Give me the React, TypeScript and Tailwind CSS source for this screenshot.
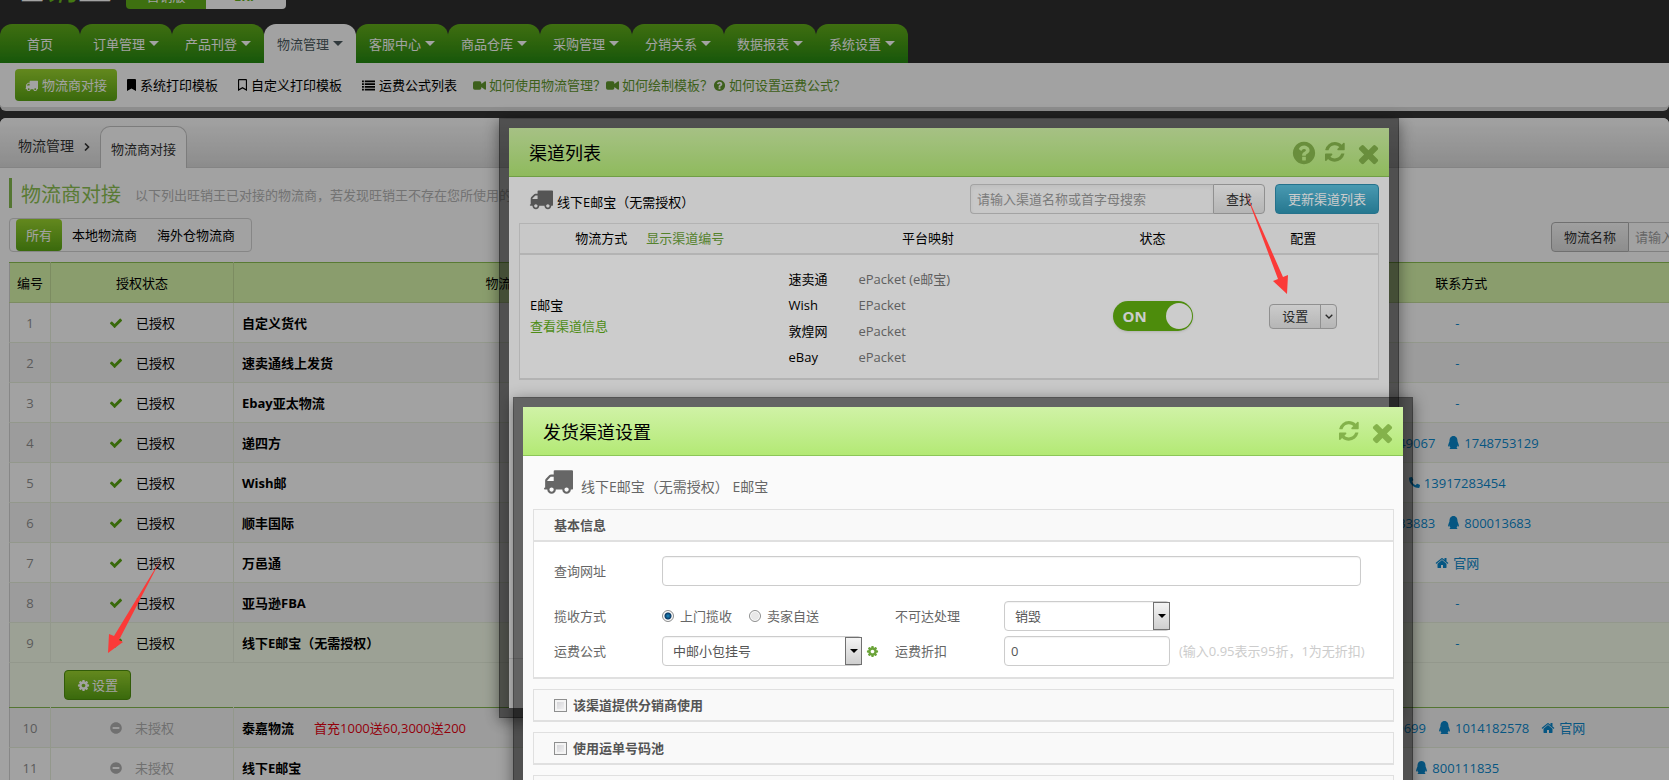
import type { ReactNode } from "react";
import { FaBookmark, FaMinusCircle, FaPhoneAlt, FaQq, FaRegBookmark } from "react-icons/fa";

const icons = {
  check: "M1671 566q0 40-28 68l-724 724-136 136q-28 28-68 28t-68-28l-136-136-362-362q-28-28-28-68t28-68l136-136q28-28 68-28t68 28l294 295 656-657q28-28 68-28t68 28l136 136q28 28 28 68z",
  times: "M1490 1322q0 40-28 68l-136 136q-28 28-68 28t-68-28l-294-294-294 294q-28 28-68 28t-68-28l-136-136q-28-28-28-68t28-68l294-294-294-294q-28-28-28-68t28-68l136-136q28-28 68-28t68 28l294 294 294-294q28-28 68-28t68 28l136 136q28 28 28 68t-28 68l-294 294 294 294q28 28 28 68z",
  refresh: "M1511 928q0 5-1 7-64 268-268 434.5t-478 166.5q-146 0-282.5-55t-243.5-157l-129 129q-19 19-45 19t-45-19-19-45v-448q0-26 19-45t45-19h448q26 0 45 19t19 45-19 45l-137 137q71 66 161 102t187 36q134 0 250-65t186-179q11-17 53-117 8-23 30-23h192q13 0 22.5 9.5t9.5 22.5zm25-800v448q0 26-19 45t-45 19h-448q-26 0-45-19t-19-45 19-45l138-138q-148-137-349-137-134 0-250 65t-186 179q-11 17-53 117-8 23-30 23h-199q-13 0-22.5-9.5t-9.5-22.5v-7q65-268 270-434.5t480-166.5q146 0 284 55.5t245 156.5l130-129q19-19 45-19t45 19 19 45z",
  question: "M1024 1376v-192q0-14-9-23t-23-9h-192q-14 0-23 9t-9 23v192q0 14 9 23t23 9h192q14 0 23-9t9-23zm256-672q0-88-55.5-163t-138.5-116-170-41q-243 0-371 213-15 24 8 42l132 100q7 6 19 6 16 0 25-12 53-68 86-92 34-24 86-24 48 0 85.5 26t37.5 59q0 38-20 61t-68 45q-63 28-115.5 86.5t-52.5 125.5v36q0 14 9 23t23 9h192q14 0 23-9t9-23q0-19 21.5-49.5t54.5-49.5q32-18 49-28.5t46-35 44.5-48 28-60.5 12.5-81zm384 192q0 209-103 385.5t-279.5 279.5-385.5 103-385.5-103-279.5-279.5-103-385.5 103-385.5 279.5-279.5 385.5-103 385.5 103 279.5 279.5 103 385.5z",
  truck: "M640 1408q0-52-38-90t-90-38-90 38-38 90 38 90 90 38 90-38 38-90zm-384-512h384v-256h-158q-13 0-22 9l-195 195q-9 9-9 22v30zm1280 512q0-52-38-90t-90-38-90 38-38 90 38 90 90 38 90-38 38-90zm256-1088v1024q0 15-4 26.5t-13.5 18.5-16.5 11.5-23.5 6-22.5 2-25.5 0-22.5-.5q0 106-75 181t-181 75-181-75-75-181h-384q0 106-75 181t-181 75-181-75-75-181h-64q-3 0-22.5.5t-25.5 0-22.5-2-23.5-6-16.5-11.5-13.5-18.5-4-26.5q0-26 19-45t45-19v-320q0-8-.5-35t0-38 2.5-34.5 6.5-37 14-30.5 22.5-30l198-198q19-19 50.5-32t58.5-13h160v-192q0-26 19-45t45-19h1024q26 0 45 19t19 45z",
  cog: "M1152 896q0-106-75-181t-181-75-181 75-75 181 75 181 181 75 181-75 75-181zm512-109v222q0 12-8 23t-20 13l-185 28q-19 54-39 91 35 50 107 138 10 12 10 25t-9 23q-27 37-99 108t-94 71q-12 0-26-9l-138-108q-44 23-91 38-16 136-29 186-7 28-36 28h-222q-14 0-24.5-8.5t-11.5-21.5l-28-184q-49-16-90-37l-141 107q-10 9-25 9-14 0-25-11-126-114-165-168-7-10-7-23 0-12 8-23 15-21 51-66.5t54-70.5q-27-50-41-99l-183-27q-13-2-21-12.5t-8-23.5v-222q0-12 8-23t19-13l186-28q14-46 39-92-40-57-107-138-10-12-10-24 0-10 9-23 26-36 98.5-107.5t94.5-71.5q13 0 26 10l138 107q44-23 91-38 16-136 29-186 7-28 36-28h222q14 0 24.5 8.5t11.5 21.5l28 184q49 16 90 37l142-107q9-9 24-9 13 0 25 10 129 119 165 170 7 8 7 22 0 12-8 23-15 21-51 66.5t-54 70.5q26 50 41 98l183 28q13 2 21 12.5t8 23.5z",
  home: "M1472 992v480q0 26-19 45t-45 19h-384v-384h-256v384h-384q-26 0-45-19t-19-45v-480q0-1 .5-3t.5-3l575-474 575 474q1 2 1 6zm223-69l-62 74q-8 9-21 11h-3q-13 0-21-7l-692-577-692 577q-12 8-24 7-13-2-21-11l-62-74q-8-10-7-23.5t11-21.5l719-599q32-26 76-26t76 26l244 204v-195q0-14 9-23t23-9h192q14 0 23 9t9 23v408l219 182q10 8 11 21.5t-7 23.5z",
  video: "M0 560q0-240 240-240h672q240 0 240 240v120l460-350q180-60 180 90v952q0 150-180 90l-460-350v120q0 240-240 240h-672q-240 0-240-240z",
  list: "M0 220h256v220h-256zM0 600h256v220h-256zM0 980h256v220h-256zM0 1360h256v220h-256zM384 220h1408v220h-1408zM384 600h1408v220h-1408zM384 980h1408v220h-1408zM384 1360h1408v220h-1408z",
};

function Icon({ name, className }: { name: keyof typeof icons; className: string }) {
  return (
    <svg viewBox="0 0 1792 1792" fill="currentColor" aria-hidden="true" className={`shrink-0 ${className}`}>
      <path d={icons[name]} />
    </svg>
  );
}

const tabs = ["订单管理", "产品刊登", "物流管理", "客服中心", "商品仓库", "采购管理", "分销关系", "数据报表", "系统设置"];

type Contact = { kind: "phone" | "qq" | "home" | "text"; text: string };
type Carrier = { id: number; name: string; ok: boolean; note?: string; contacts?: Contact[] };

const carriers: Carrier[] = [
  { id: 1, name: "自定义货代", ok: true },
  { id: 2, name: "速卖通线上发货", ok: true },
  { id: 3, name: "Ebay亚太物流", ok: true },
  { id: 4, name: "递四方", ok: true, contacts: [{ kind: "text", text: "82949067" }, { kind: "qq", text: "1748753129" }] },
  { id: 5, name: "Wish邮", ok: true, contacts: [{ kind: "phone", text: "13917283454" }] },
  { id: 6, name: "顺丰国际", ok: true, contacts: [{ kind: "text", text: "2233883" }, { kind: "qq", text: "800013683" }] },
  { id: 7, name: "万邑通", ok: true, contacts: [{ kind: "home", text: "官网" }] },
  { id: 8, name: "亚马逊FBA", ok: true },
  { id: 9, name: "线下E邮宝（无需授权）", ok: true },
  { id: 10, name: "泰嘉物流", ok: false, note: "首充1000送60,3000送200", contacts: [{ kind: "phone", text: "13530029699" }, { kind: "qq", text: "1014182578" }, { kind: "home", text: "官网" }] },
  { id: 11, name: "线下E邮宝", ok: false, contacts: [{ kind: "qq", text: "800111835" }] },
];

const mappings = [
  ["速卖通", "ePacket (e邮宝)"],
  ["Wish", "EPacket"],
  ["敦煌网", "ePacket"],
  ["eBay", "ePacket"],
];

function Caret() {
  return <span className="w-0 h-0 border-x-[5px] border-x-transparent border-t-[5px] border-t-current" />;
}

function TopBar() {
  return (
    <header className="bg-[#2f2f2f]">
      <div className="h-6 flex items-start overflow-hidden">
        <div className="w-[126px] h-[6px] pl-[10px] flex items-end overflow-hidden italic text-[34px] leading-[38px] text-white">
          <span>旺</span><span className="text-[#6abf1d]">销</span><span>王</span>
        </div>
        <div className="flex items-end h-[9px] w-40 rounded-b overflow-hidden text-[13px] leading-[26px] text-center">
          <span className="w-20 bg-[#62b01a] text-white">营销版</span>
          <span className="w-20 bg-white font-bold text-[#62b01a]">ERP</span>
        </div>
      </div>
      <nav className="flex text-[13px]">
        <a href="#" className="w-20 h-[39px] flex items-center justify-center rounded-t-xl bg-linear-to-b from-[#63ae1a] to-[#238911] text-white">首页</a>
        {tabs.map((tab) => (
          <a
            key={tab}
            href="#"
            className={
              tab === "物流管理"
                ? "w-[92px] h-[39px] flex items-center justify-center gap-1 rounded-t-xl bg-[#fefefe] text-[#4c5a5f]"
                : "w-[92px] h-[39px] flex items-center justify-center gap-1 rounded-t-xl bg-linear-to-b from-[#63ae1a] to-[#238911] text-white"
            }
          >
            {tab}<Caret />
          </a>
        ))}
      </nav>
    </header>
  );
}

function SubNav() {
  return (
    <div className="h-12 flex items-center bg-[#fefefe] border-b-4 border-[#dedede] rounded-b-md pl-[15px] py-[6px]">
      <a href="#" className="h-8 px-[10px] flex items-center gap-1 rounded bg-linear-to-b from-[#9cd630] to-[#5ba614] text-white"><Icon name="truck" className="size-[13px]" />物流商对接</a>
      <a href="#" className="px-[10px] flex items-center gap-1"><FaBookmark className="w-[9px] h-3" />系统打印模板</a>
      <a href="#" className="px-[10px] flex items-center gap-1"><FaRegBookmark className="w-[9px] h-3" />自定义打印模板</a>
      <a href="#" className="px-[10px] flex items-center gap-1"><Icon name="list" className="size-[13px]" />运费公式列表</a>
      <div className="flex pl-[6px] text-[#61972c]">
        <a href="#" className="flex items-center gap-[3px]"><Icon name="video" className="size-[13px]" />如何使用物流管理？</a>
        <a href="#" className="flex items-center gap-[3px]"><Icon name="video" className="size-[13px]" />如何绘制模板？</a>
        <a href="#" className="flex items-center gap-[3px]"><Icon name="question" className="size-[13px]" />如何设置运费公式？</a>
      </div>
    </div>
  );
}

function ContactLink({ kind, text }: Contact) {
  return (
    <a href="#" className="inline-flex items-center gap-1">
      {kind === "phone" && <FaPhoneAlt className="size-[11px]" />}
      {kind === "qq" && <FaQq className="size-[13px]" />}
      {kind === "home" && <Icon name="home" className="size-[14px]" />}
      {text}
    </a>
  );
}

function CarrierRow({ carrier }: { carrier: Carrier }) {
  const cell = "border-r border-b border-[#e6efdb]";
  const shade = carrier.id === 9 ? "bg-[#f6fdea]" : carrier.id % 2 ? "bg-[#fefefe]" : "bg-[#f6f6f6]";
  return (
    <tr className={`h-10 ${shade}`}>
      <td className={`${cell} text-center text-[#8f8f8f]`}>{carrier.id}</td>
      <td className={cell}>
        <div className={`flex items-center justify-center gap-[13px] ${carrier.ok ? "" : "text-[#b0b0b0]"}`}>
          {carrier.ok ? <Icon name="check" className="size-[14px] text-[#5ba614]" /> : <FaMinusCircle className="size-3" />}
          {carrier.ok ? "已授权" : "未授权"}
        </div>
      </td>
      <td className={`${cell} pl-2`}>
        <b>{carrier.name}</b>
        {carrier.note && <span className="ml-5 text-[#e60012]">{carrier.note}</span>}
      </td>
      <td className={cell} />
      <td className="pr-2 border-b border-[#e6efdb] text-[#0a88cc]">
        <div className="flex justify-center gap-3">
          {carrier.contacts ? carrier.contacts.map((c) => <ContactLink key={c.text} {...c} />) : "-"}
        </div>
      </td>
    </tr>
  );
}

function CarrierPage() {
  const head = "border-r border-[#c2dc99] font-normal";
  return (
    <main className="mt-[7px] grow bg-[#fefefe] rounded-t-md overflow-hidden">
      <div className="h-[50px] flex items-end pl-[18px] bg-linear-to-b from-[#fefefe] to-[#dcdcdc] border-b border-[#cfcfcf]">
        <span className="mb-[11px] text-[14px] leading-5 text-[#333]">物流管理</span>
        <svg viewBox="0 0 6 8" className="w-[6px] h-2 mx-[10px] mb-[16px] fill-none stroke-[#333]" strokeWidth="1.6"><path d="M1 0.5 4.5 4 1 7.5" /></svg>
        <a href="#" className="-mb-px h-[42px] px-[10px] pt-[2px] flex items-center border border-b-0 border-[#c4c4c4] rounded-t-[10px] bg-[#fefefe] text-[#333]">物流商对接</a>
      </div>
      <div className="mt-[10px] ml-[9px] h-[30px] flex items-center gap-[14px] border-l-3 border-[#84b94f] pl-[9px]">
        <h1 className="pt-[3px] text-[20px] leading-[27px] text-[#8cc152]">物流商对接</h1>
        <p className="pt-1 text-[#b4b4b4]">以下列出旺销王已对接的物流商，若发现旺销王不存在您所使用的</p>
      </div>
      <div className="mt-[10px] pl-[9px] flex items-end justify-between">
        <div className="h-[34px] flex items-center px-[6px] border border-[#d2d2d2] rounded">
          <button className="h-8 px-[10px] rounded bg-linear-to-b from-[#9cd630] to-[#5ba614] text-white">所有</button>
          <button className="h-8 px-[10px]">本地物流商</button>
          <button className="h-8 px-[10px]">海外仓物流商</button>
        </div>
        <div className="flex h-[30px]">
          <button className="px-3 rounded-l border border-[#b0b0b0] bg-linear-to-b from-[#fafafa] to-[#dedede] text-[#333]">物流名称</button>
          <input aria-label="物流名称" placeholder="请输入名称" className="w-10 pl-[6px] border-y border-[#c8c8c8] placeholder:text-[#a0a0a0]" />
        </div>
      </div>
      <table className="mt-[10px] ml-[9px] w-[calc(100%-9px)] table-fixed border-collapse border-l border-[#d4d4d4]">
        <colgroup>
          <col className="w-[41px]" />
          <col className="w-[183px]" />
          <col className="w-[556px]" />
          <col />
          <col className="w-[416px]" />
        </colgroup>
        <thead>
          <tr className="h-10 bg-[#d9f7ac] border-t border-b border-t-[#8cc152] border-b-[#c2dc99]">
            <th className={head}>编号</th>
            <th className={head}>授权状态</th>
            <th className={head}>物流名称</th>
            <th className={head} />
            <th className="font-normal">联系方式</th>
          </tr>
        </thead>
        <tbody>
          {carriers.slice(0, 9).map((c) => <CarrierRow key={c.id} carrier={c} />)}
          <tr className="h-[45px] bg-[#f6fdea] border-b border-[#84b94f]">
            <td colSpan={5} className="pl-[54px]">
              <button className="h-[30px] px-3 flex items-center gap-[2px] rounded border border-[#4f9110] bg-linear-to-b from-[#9cd630] to-[#5ba614] text-white"><Icon name="cog" className="size-[13px]" />设置</button>
            </td>
          </tr>
          {carriers.slice(9).map((c) => <CarrierRow key={c.id} carrier={c} />)}
        </tbody>
      </table>
    </main>
  );
}

function Dialog({ title, help, className, children }: { title: string; help?: boolean; className: string; children: ReactNode }) {
  return (
    <section role="dialog" aria-label={title} className={`absolute w-[900px] h-[600px] flex flex-col border-10 border-black/50 bg-[#fafafa] bg-clip-padding shadow-[0_3px_14px_rgba(0,0,0,0.45)] ${className}`}>
      <header className="h-12 shrink-0 flex items-center gap-[10px] pt-[2px] pl-5 pr-[10px] bg-linear-to-b from-[#d0f2a6] to-[#b3e974] text-[#84b24b]">
        <h2 className="mr-auto text-lg text-black">{title}</h2>
        {help && <button aria-label="帮助"><Icon name="question" className="size-[26px] -mx-[2px]" /></button>}
        <button aria-label="刷新"><Icon name="refresh" className="size-[23px]" /></button>
        <button aria-label="关闭"><Icon name="times" className="size-[29px] -mx-1" /></button>
      </header>
      <div className="grow border-t border-[#8cc658]">{children}</div>
    </section>
  );
}

function ChannelList() {
  return (
    <Dialog title="渠道列表" help className="left-[499px] top-[118px]">
      <div className="h-full flex flex-col">
        <div className="flex items-center pl-5 pr-[10px] pt-[7px]">
          <Icon name="truck" className="size-6 mr-1 text-[#6b6b6b]" />
          <span className="pt-[6px]">线下E邮宝（无需授权）</span>
          <input aria-label="渠道名称" placeholder="请输入渠道名称或首字母搜索" className="ml-auto w-[243px] h-[30px] px-[6px] border border-r-0 border-[#ccc] rounded-l inset-shadow-sm placeholder:text-[#9a9a9a]" />
          <button className="h-[30px] px-3 border border-[#b4b4b4] rounded-r bg-linear-to-b from-white to-[#e3e3e3] text-[#333]">查找</button>
          <button className="ml-[10px] h-[30px] px-3 border border-[#2f8fb0] rounded bg-linear-to-b from-[#5bc0de] to-[#2f96b4] text-white">更新渠道列表</button>
        </div>
        <table className="mt-[9px] mx-[10px] table-fixed border-collapse border border-b-2 border-[#e0e0e0]">
          <colgroup>
            <col className="w-[260px]" />
            <col />
            <col className="w-[152px]" />
            <col className="w-[150px]" />
          </colgroup>
          <thead>
            <tr className="h-[30px] border-b-2 border-[#e0e0e0]">
              <th className="font-normal">物流方式<a href="#" className="ml-[19px] text-[#6aa338]">显示渠道编号</a></th>
              <th className="font-normal">平台映射</th>
              <th className="font-normal">状态</th>
              <th className="font-normal">配置</th>
            </tr>
          </thead>
          <tbody>
            <tr className="h-[125px] bg-white">
              <td className="pl-[10px] leading-[21px]">E邮宝<br /><a href="#" className="text-[#62b01a]">查看渠道信息</a></td>
              <td className="pl-[9px]">
                <dl className="grid grid-cols-[70px_1fr] pt-1 leading-[26px]">
                  {mappings.map(([platform, service]) => (
                    <div key={platform} className="contents">
                      <dt>{platform}</dt>
                      <dd className="text-[#777]">{service}</dd>
                    </div>
                  ))}
                </dl>
              </td>
              <td>
                <button role="switch" aria-checked="true" className="mx-auto w-20 h-[30px] pl-[10px] pr-px flex items-center justify-between rounded-full bg-[#61b010] text-[15px] font-bold text-white shadow-sm">
                  ON<span className="size-[26px] rounded-full bg-white" />
                </button>
              </td>
              <td>
                <div className="mx-auto w-[68px] h-[25px] flex border border-[#b4b4b4] rounded bg-linear-to-b from-white to-[#e3e3e3] text-[#333]">
                  <button className="grow">设置</button>
                  <button aria-label="更多" className="w-4 flex items-center justify-center border-l border-[#b4b4b4]">
                    <svg viewBox="0 0 8 5" className="w-2 h-[5px] fill-none stroke-current" strokeWidth="1.3"><path d="M0.7 0.7 4 4 7.3 0.7" /></svg>
                  </button>
                </div>
              </td>
            </tr>
          </tbody>
        </table>
        <div className="mt-auto h-[50px] border-t border-[#ddd] bg-[#f5f5f5]" />
      </div>
    </Dialog>
  );
}

function Select({ id, value, className }: { id: string; value: string; className: string }) {
  return (
    <span className={`relative h-[30px] shrink-0 ${className}`}>
      <select id={id} className="w-full h-full appearance-none pl-[10px] pr-5 border border-[#ccc] rounded inset-shadow-xs bg-white text-[#555]">
        <option>{value}</option>
      </select>
      <span className="absolute right-0 top-px w-[17px] h-7 flex items-center justify-center border border-[#707070] bg-linear-to-b from-[#f4f4f4] to-[#cfcfcf] text-black pointer-events-none">
        <span className="w-0 h-0 border-x-4 border-x-transparent border-t-4 border-t-current" />
      </span>
    </span>
  );
}

function Radio({ label, checked }: { label: string; checked?: boolean }) {
  return (
    <label className="flex items-center gap-[6px] mr-[17px]">
      <input
        type="radio"
        name="pickup"
        defaultChecked={checked}
        className="appearance-none size-3 rounded-full border border-[#8e8f8f] bg-[#e8e8e8] inset-ring-1 inset-ring-white checked:bg-[radial-gradient(circle,#1c8ec4_0,#0b3a66_3px,#e8e8e8_4px)]"
      />
      {label}
    </label>
  );
}

function CheckPanel({ label }: { label: string }) {
  return (
    <label className="mt-[10px] h-[33px] flex items-center gap-[6px] pl-5 border border-b-2 border-[#e0e0e0] bg-[#f9f9f9] font-bold text-[#555]">
      <input type="checkbox" className="appearance-none size-[13px] border border-[#8e8f8f] bg-linear-to-br from-[#cfcfd3] to-[#f6f6f6] inset-ring-2 inset-ring-[#f4f4f4]" />
      {label}
    </label>
  );
}

function ChannelSettings() {
  return (
    <Dialog title="发货渠道设置" className="left-[513px] top-[397px]">
      <form className="pl-[10px] pr-[9px] text-[#666]">
        <div className="h-[53px] flex items-center gap-2 pl-[10px] text-sm">
          <Icon name="truck" className="size-[30px] mb-1" />
          <span className="pt-2">线下E邮宝（无需授权） E邮宝</span>
        </div>
        <div className="border border-b-2 border-[#e0e0e0] bg-white">
          <h3 className="h-8 flex items-center pl-5 border-b-2 border-[#e0e0e0] bg-[#f9f9f9] font-bold text-[#555]">基本信息</h3>
          <div className="pl-5 pr-8 pt-[14px] pb-[11px]">
            <div className="flex items-center h-[30px]">
              <label htmlFor="url" className="w-[108px] shrink-0">查询网址</label>
              <input id="url" className="grow h-[30px] px-[6px] border border-[#ccc] rounded inset-shadow-xs" />
            </div>
            <div className="flex items-center h-[30px] mt-[15px]">
              <span className="w-[108px] shrink-0">揽收方式</span>
              <div className="flex w-[233px] shrink-0">
                <Radio label="上门揽收" checked />
                <Radio label="卖家自送" />
              </div>
              <label htmlFor="undeliverable" className="w-[109px] shrink-0">不可达处理</label>
              <Select id="undeliverable" value="销毁" className="w-[166px]" />
            </div>
            <div className="flex items-center h-[30px] mt-[5px]">
              <label htmlFor="formula" className="w-[108px] shrink-0">运费公式</label>
              <div className="flex items-center gap-1 w-[233px] shrink-0">
                <Select id="formula" value="中邮小包挂号" className="w-[200px]" />
                <Icon name="cog" className="size-[13px] text-[#6aa338]" />
              </div>
              <label htmlFor="discount" className="w-[109px] shrink-0">运费折扣</label>
              <input id="discount" defaultValue="0" className="w-[166px] shrink-0 h-[30px] px-[6px] border border-[#ccc] rounded inset-shadow-xs text-[#555]" />
              <span className="ml-[9px] whitespace-nowrap text-[#ccc]">(输入0.95表示95折，1为无折扣)</span>
            </div>
          </div>
        </div>
        <CheckPanel label="该渠道提供分销商使用" />
        <CheckPanel label="使用运单号码池" />
        <CheckPanel label="使用自定义发货地址" />
      </form>
    </Dialog>
  );
}

export default function App() {
  return (
    <div className="relative h-screen overflow-hidden flex flex-col bg-[#353535] font-['Open_Sans','Noto_Sans_CJK_SC',sans-serif] text-[13px] leading-5 text-black">
      <TopBar />
      <SubNav />
      <CarrierPage />
      <div className="absolute inset-0 bg-black/20" />
      <ChannelList />
      <div className="absolute inset-0 bg-black/20" />
      <ChannelSettings />
      {/* pointer arrows */}
      <svg className="absolute left-0 top-0 w-full h-full fill-[#fb3a38] pointer-events-none">
        <path d="M1245 191 1278 279 1273 281 1287 294 1288 275 1283 277Z" />
        <path d="M161 559 114 636 109 634 108 653 123 642 119 640Z" />
      </svg>
    </div>
  );
}
